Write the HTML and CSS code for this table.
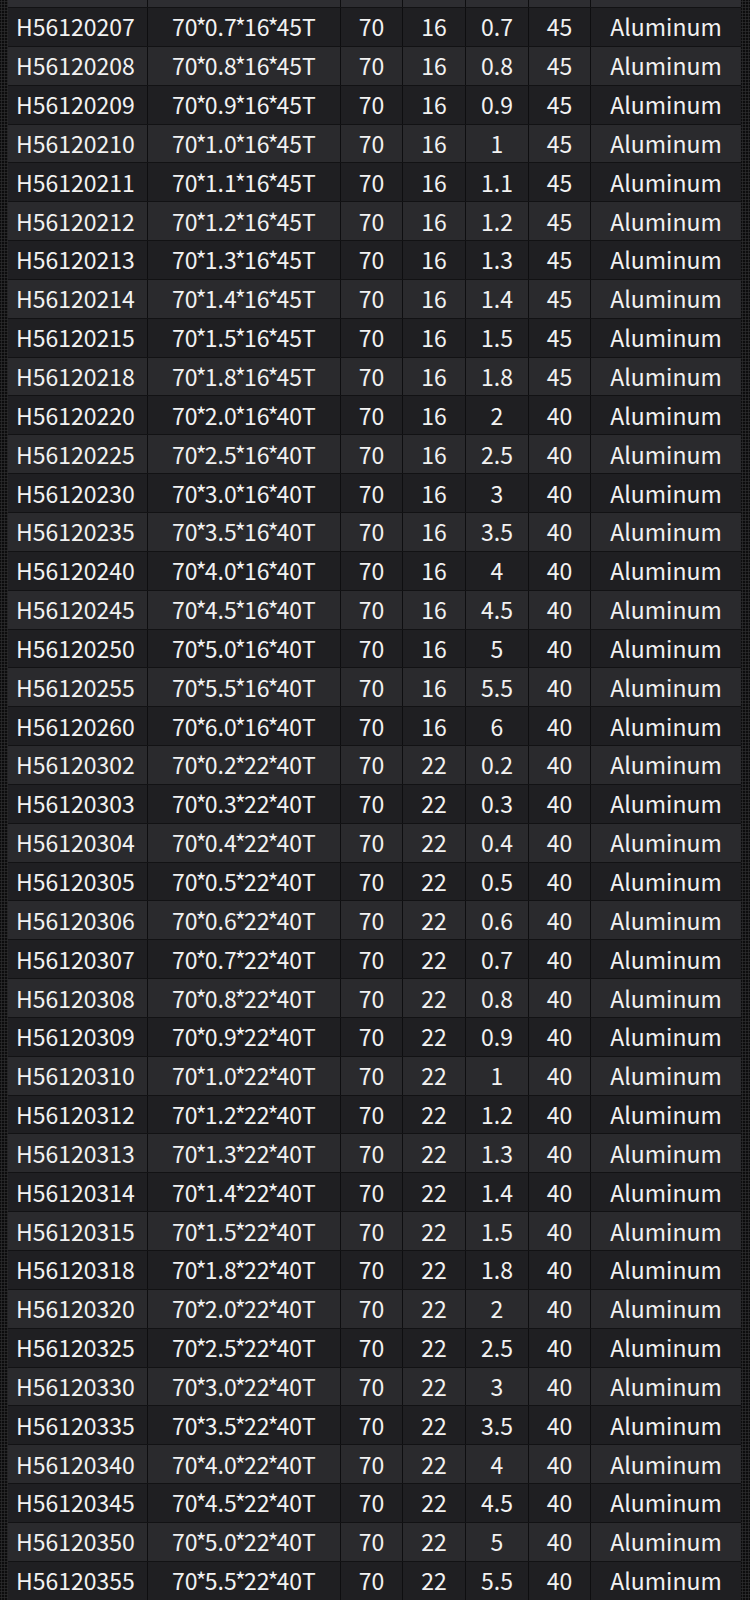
FILE: index.html
```html
<!DOCTYPE html>
<html>
<head>
<meta charset="utf-8">
<link rel="stylesheet" href="styles.css">
</head>
<body>
<div class="sheet">
  <div class="row head"><div class="c c1"></div><div class="c c2"></div><div class="c c3"></div><div class="c c4"></div><div class="c c5"></div><div class="c c6"></div><div class="c c7"></div></div>
  <div class="row"><div class="c c1">H56120207</div><div class="c c2">70<i>*</i>0.7<i>*</i>16<i>*</i>45T</div><div class="c c3">70</div><div class="c c4">16</div><div class="c c5">0.7</div><div class="c c6">45</div><div class="c c7">Aluminum</div></div>
  <div class="row alt"><div class="c c1">H56120208</div><div class="c c2">70<i>*</i>0.8<i>*</i>16<i>*</i>45T</div><div class="c c3">70</div><div class="c c4">16</div><div class="c c5">0.8</div><div class="c c6">45</div><div class="c c7">Aluminum</div></div>
  <div class="row"><div class="c c1">H56120209</div><div class="c c2">70<i>*</i>0.9<i>*</i>16<i>*</i>45T</div><div class="c c3">70</div><div class="c c4">16</div><div class="c c5">0.9</div><div class="c c6">45</div><div class="c c7">Aluminum</div></div>
  <div class="row alt"><div class="c c1">H56120210</div><div class="c c2">70<i>*</i>1.0<i>*</i>16<i>*</i>45T</div><div class="c c3">70</div><div class="c c4">16</div><div class="c c5">1</div><div class="c c6">45</div><div class="c c7">Aluminum</div></div>
  <div class="row"><div class="c c1">H56120211</div><div class="c c2">70<i>*</i>1.1<i>*</i>16<i>*</i>45T</div><div class="c c3">70</div><div class="c c4">16</div><div class="c c5">1.1</div><div class="c c6">45</div><div class="c c7">Aluminum</div></div>
  <div class="row alt"><div class="c c1">H56120212</div><div class="c c2">70<i>*</i>1.2<i>*</i>16<i>*</i>45T</div><div class="c c3">70</div><div class="c c4">16</div><div class="c c5">1.2</div><div class="c c6">45</div><div class="c c7">Aluminum</div></div>
  <div class="row"><div class="c c1">H56120213</div><div class="c c2">70<i>*</i>1.3<i>*</i>16<i>*</i>45T</div><div class="c c3">70</div><div class="c c4">16</div><div class="c c5">1.3</div><div class="c c6">45</div><div class="c c7">Aluminum</div></div>
  <div class="row alt"><div class="c c1">H56120214</div><div class="c c2">70<i>*</i>1.4<i>*</i>16<i>*</i>45T</div><div class="c c3">70</div><div class="c c4">16</div><div class="c c5">1.4</div><div class="c c6">45</div><div class="c c7">Aluminum</div></div>
  <div class="row"><div class="c c1">H56120215</div><div class="c c2">70<i>*</i>1.5<i>*</i>16<i>*</i>45T</div><div class="c c3">70</div><div class="c c4">16</div><div class="c c5">1.5</div><div class="c c6">45</div><div class="c c7">Aluminum</div></div>
  <div class="row alt"><div class="c c1">H56120218</div><div class="c c2">70<i>*</i>1.8<i>*</i>16<i>*</i>45T</div><div class="c c3">70</div><div class="c c4">16</div><div class="c c5">1.8</div><div class="c c6">45</div><div class="c c7">Aluminum</div></div>
  <div class="row"><div class="c c1">H56120220</div><div class="c c2">70<i>*</i>2.0<i>*</i>16<i>*</i>40T</div><div class="c c3">70</div><div class="c c4">16</div><div class="c c5">2</div><div class="c c6">40</div><div class="c c7">Aluminum</div></div>
  <div class="row alt"><div class="c c1">H56120225</div><div class="c c2">70<i>*</i>2.5<i>*</i>16<i>*</i>40T</div><div class="c c3">70</div><div class="c c4">16</div><div class="c c5">2.5</div><div class="c c6">40</div><div class="c c7">Aluminum</div></div>
  <div class="row"><div class="c c1">H56120230</div><div class="c c2">70<i>*</i>3.0<i>*</i>16<i>*</i>40T</div><div class="c c3">70</div><div class="c c4">16</div><div class="c c5">3</div><div class="c c6">40</div><div class="c c7">Aluminum</div></div>
  <div class="row alt"><div class="c c1">H56120235</div><div class="c c2">70<i>*</i>3.5<i>*</i>16<i>*</i>40T</div><div class="c c3">70</div><div class="c c4">16</div><div class="c c5">3.5</div><div class="c c6">40</div><div class="c c7">Aluminum</div></div>
  <div class="row"><div class="c c1">H56120240</div><div class="c c2">70<i>*</i>4.0<i>*</i>16<i>*</i>40T</div><div class="c c3">70</div><div class="c c4">16</div><div class="c c5">4</div><div class="c c6">40</div><div class="c c7">Aluminum</div></div>
  <div class="row alt"><div class="c c1">H56120245</div><div class="c c2">70<i>*</i>4.5<i>*</i>16<i>*</i>40T</div><div class="c c3">70</div><div class="c c4">16</div><div class="c c5">4.5</div><div class="c c6">40</div><div class="c c7">Aluminum</div></div>
  <div class="row"><div class="c c1">H56120250</div><div class="c c2">70<i>*</i>5.0<i>*</i>16<i>*</i>40T</div><div class="c c3">70</div><div class="c c4">16</div><div class="c c5">5</div><div class="c c6">40</div><div class="c c7">Aluminum</div></div>
  <div class="row alt"><div class="c c1">H56120255</div><div class="c c2">70<i>*</i>5.5<i>*</i>16<i>*</i>40T</div><div class="c c3">70</div><div class="c c4">16</div><div class="c c5">5.5</div><div class="c c6">40</div><div class="c c7">Aluminum</div></div>
  <div class="row"><div class="c c1">H56120260</div><div class="c c2">70<i>*</i>6.0<i>*</i>16<i>*</i>40T</div><div class="c c3">70</div><div class="c c4">16</div><div class="c c5">6</div><div class="c c6">40</div><div class="c c7">Aluminum</div></div>
  <div class="row alt"><div class="c c1">H56120302</div><div class="c c2">70<i>*</i>0.2<i>*</i>22<i>*</i>40T</div><div class="c c3">70</div><div class="c c4">22</div><div class="c c5">0.2</div><div class="c c6">40</div><div class="c c7">Aluminum</div></div>
  <div class="row"><div class="c c1">H56120303</div><div class="c c2">70<i>*</i>0.3<i>*</i>22<i>*</i>40T</div><div class="c c3">70</div><div class="c c4">22</div><div class="c c5">0.3</div><div class="c c6">40</div><div class="c c7">Aluminum</div></div>
  <div class="row alt"><div class="c c1">H56120304</div><div class="c c2">70<i>*</i>0.4<i>*</i>22<i>*</i>40T</div><div class="c c3">70</div><div class="c c4">22</div><div class="c c5">0.4</div><div class="c c6">40</div><div class="c c7">Aluminum</div></div>
  <div class="row"><div class="c c1">H56120305</div><div class="c c2">70<i>*</i>0.5<i>*</i>22<i>*</i>40T</div><div class="c c3">70</div><div class="c c4">22</div><div class="c c5">0.5</div><div class="c c6">40</div><div class="c c7">Aluminum</div></div>
  <div class="row alt"><div class="c c1">H56120306</div><div class="c c2">70<i>*</i>0.6<i>*</i>22<i>*</i>40T</div><div class="c c3">70</div><div class="c c4">22</div><div class="c c5">0.6</div><div class="c c6">40</div><div class="c c7">Aluminum</div></div>
  <div class="row"><div class="c c1">H56120307</div><div class="c c2">70<i>*</i>0.7<i>*</i>22<i>*</i>40T</div><div class="c c3">70</div><div class="c c4">22</div><div class="c c5">0.7</div><div class="c c6">40</div><div class="c c7">Aluminum</div></div>
  <div class="row alt"><div class="c c1">H56120308</div><div class="c c2">70<i>*</i>0.8<i>*</i>22<i>*</i>40T</div><div class="c c3">70</div><div class="c c4">22</div><div class="c c5">0.8</div><div class="c c6">40</div><div class="c c7">Aluminum</div></div>
  <div class="row"><div class="c c1">H56120309</div><div class="c c2">70<i>*</i>0.9<i>*</i>22<i>*</i>40T</div><div class="c c3">70</div><div class="c c4">22</div><div class="c c5">0.9</div><div class="c c6">40</div><div class="c c7">Aluminum</div></div>
  <div class="row alt"><div class="c c1">H56120310</div><div class="c c2">70<i>*</i>1.0<i>*</i>22<i>*</i>40T</div><div class="c c3">70</div><div class="c c4">22</div><div class="c c5">1</div><div class="c c6">40</div><div class="c c7">Aluminum</div></div>
  <div class="row"><div class="c c1">H56120312</div><div class="c c2">70<i>*</i>1.2<i>*</i>22<i>*</i>40T</div><div class="c c3">70</div><div class="c c4">22</div><div class="c c5">1.2</div><div class="c c6">40</div><div class="c c7">Aluminum</div></div>
  <div class="row alt"><div class="c c1">H56120313</div><div class="c c2">70<i>*</i>1.3<i>*</i>22<i>*</i>40T</div><div class="c c3">70</div><div class="c c4">22</div><div class="c c5">1.3</div><div class="c c6">40</div><div class="c c7">Aluminum</div></div>
  <div class="row"><div class="c c1">H56120314</div><div class="c c2">70<i>*</i>1.4<i>*</i>22<i>*</i>40T</div><div class="c c3">70</div><div class="c c4">22</div><div class="c c5">1.4</div><div class="c c6">40</div><div class="c c7">Aluminum</div></div>
  <div class="row alt"><div class="c c1">H56120315</div><div class="c c2">70<i>*</i>1.5<i>*</i>22<i>*</i>40T</div><div class="c c3">70</div><div class="c c4">22</div><div class="c c5">1.5</div><div class="c c6">40</div><div class="c c7">Aluminum</div></div>
  <div class="row"><div class="c c1">H56120318</div><div class="c c2">70<i>*</i>1.8<i>*</i>22<i>*</i>40T</div><div class="c c3">70</div><div class="c c4">22</div><div class="c c5">1.8</div><div class="c c6">40</div><div class="c c7">Aluminum</div></div>
  <div class="row alt"><div class="c c1">H56120320</div><div class="c c2">70<i>*</i>2.0<i>*</i>22<i>*</i>40T</div><div class="c c3">70</div><div class="c c4">22</div><div class="c c5">2</div><div class="c c6">40</div><div class="c c7">Aluminum</div></div>
  <div class="row"><div class="c c1">H56120325</div><div class="c c2">70<i>*</i>2.5<i>*</i>22<i>*</i>40T</div><div class="c c3">70</div><div class="c c4">22</div><div class="c c5">2.5</div><div class="c c6">40</div><div class="c c7">Aluminum</div></div>
  <div class="row alt"><div class="c c1">H56120330</div><div class="c c2">70<i>*</i>3.0<i>*</i>22<i>*</i>40T</div><div class="c c3">70</div><div class="c c4">22</div><div class="c c5">3</div><div class="c c6">40</div><div class="c c7">Aluminum</div></div>
  <div class="row"><div class="c c1">H56120335</div><div class="c c2">70<i>*</i>3.5<i>*</i>22<i>*</i>40T</div><div class="c c3">70</div><div class="c c4">22</div><div class="c c5">3.5</div><div class="c c6">40</div><div class="c c7">Aluminum</div></div>
  <div class="row alt"><div class="c c1">H56120340</div><div class="c c2">70<i>*</i>4.0<i>*</i>22<i>*</i>40T</div><div class="c c3">70</div><div class="c c4">22</div><div class="c c5">4</div><div class="c c6">40</div><div class="c c7">Aluminum</div></div>
  <div class="row"><div class="c c1">H56120345</div><div class="c c2">70<i>*</i>4.5<i>*</i>22<i>*</i>40T</div><div class="c c3">70</div><div class="c c4">22</div><div class="c c5">4.5</div><div class="c c6">40</div><div class="c c7">Aluminum</div></div>
  <div class="row alt"><div class="c c1">H56120350</div><div class="c c2">70<i>*</i>5.0<i>*</i>22<i>*</i>40T</div><div class="c c3">70</div><div class="c c4">22</div><div class="c c5">5</div><div class="c c6">40</div><div class="c c7">Aluminum</div></div>
  <div class="row"><div class="c c1">H56120355</div><div class="c c2">70<i>*</i>5.5<i>*</i>22<i>*</i>40T</div><div class="c c3">70</div><div class="c c4">22</div><div class="c c5">5.5</div><div class="c c6">40</div><div class="c c7">Aluminum</div></div>
</div>
</body>
</html>
```
FILE: styles.css
```css
html, body {
  margin: 0;
  padding: 0;
}
body {
  width: 750px;
  height: 1600px;
  overflow: hidden;
  background-color: #0c0c0d;
  background-image: radial-gradient(circle, #2a2a2c 0.9px, transparent 1.3px);
  background-size: 3px 3px;
  background-position: 0 0;
  font-family: "Noto Sans CJK SC", "Noto Sans", sans-serif;
  color: #f2f2f2;
}
.sheet {
  margin-left: 8px;
  width: 733px;
  display: flex;
  flex-direction: column;
}
.row {
  display: grid;
  grid-template-columns: 139px 193px 62px 63px 63px 62px 151px;
  height: 38.85px;
  box-sizing: border-box;
  border-bottom: 1px solid #121214;
  background: #1f1f22;
}
.row.alt {
  background: #2a2a2d;
}
.row.head {
  height: 8px;
  background: #2d2d31;
  overflow: hidden;
}
.c {
  display: flex;
  align-items: center;
  justify-content: center;
  font-size: 23px;
  line-height: 1;
  white-space: nowrap;
  border-left: 1px solid #0e0e10;
}
.c1 {
  justify-content: flex-start;
  padding-left: 8px;
  border-left: none;
}
.c2 i {
  font-style: normal;
  margin: 0 -1.8px;
}
```
